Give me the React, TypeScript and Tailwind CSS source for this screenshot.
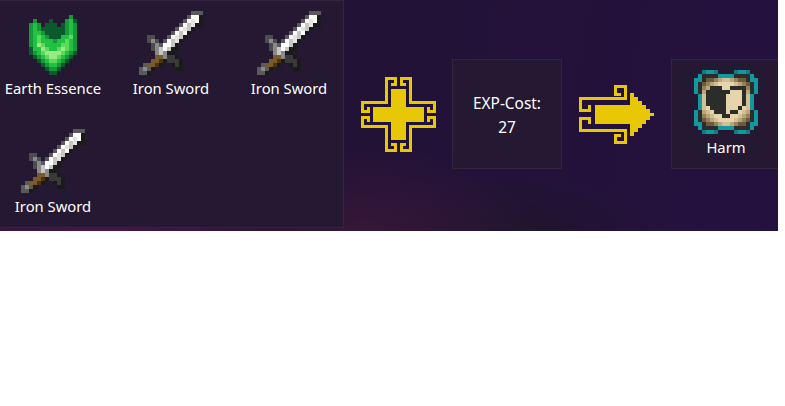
import React from "react";

// palette for the 16x16 item sprites
const colors: Record<string, string> = {
  // earth essence
  d: "#0a5a2b",
  m: "#16973a",
  G: "#22c143",
  L: "#5fd95c",
  P: "#97ea84",
  // sword
  g: "#5a5a5a",
  W: "#ffffff",
  l: "#e4e4e4",
  k: "#1a1a1a",
  A: "#4d4d4d",
  B: "#8a8a8a",
  C: "#c6c6c6",
  S: "#3a3a3a",
  T: "#7a5a26",
  t: "#4a3414",
  // scroll
  a: "#1298a0",
  b: "#0f7c86",
  K: "#2c2c2a",
  1: "#6f5b3c",
  2: "#97815a",
  3: "#b8a47d",
  4: "#d3bf96",
  5: "#e6d5aa",
};

const essence = [
  "................",
  "............m...",
  "...m...d...mGd..",
  "..mGm.ddd.dmGm..",
  "..mGmddddddmGm..",
  "..mGGmdddddmGm..",
  "..mGLGmdddGGLm..",
  "..mGLGGGmGGLGm..",
  "..mGPLGGGGLLGm..",
  "..dGGPLGGLPLGm..",
  "..dmGLPPPPLGmd..",
  "...dmGLPPLGmd...",
  "....dmGLLGmd....",
  ".....dmGGmd.....",
  "......dmmd......",
  ".......dd.......",
];

const sword = [
  ".............ggg",
  "............gWWk",
  "...........gWlWk",
  "..........gWClkk",
  ".........gWlCk..",
  "........gWCWk...",
  "..AA...gWlCk....",
  "..ABA.gWClk.....",
  "...ABgWWCk......",
  "...ABCWCkk......",
  "....BCBkk.......",
  "....TTBSSk......",
  "...TTtkSSSk.....",
  ".gTTtk..kSk.....",
  "gBgk.....kk.....",
  "ggk.............",
];

const scroll = [
  "..baab....baab..",
  ".aKKKKaaaaKKKKa.",
  "aaK1123443211Kaa",
  "aK123455554321Ka",
  "aK23KKK55KKKK2Ka",
  "aK3KKKKKK555K3Ka",
  ".a4KKKKK5555K4a.",
  ".a4KKKKK5555K4a.",
  ".a4KKKKK5555K4a.",
  ".a45KKKK555K54a.",
  "aK345KKK5KK543Ka",
  "aK23455KK55432Ka",
  "aK123455554321Ka",
  "aaK1123443211Kaa",
  ".aKKKKaaaaKKKKa.",
  "..baab....baab..",
];

function Sprite({ rows }: { rows: string[] }) {
  return (
    <svg width="64" height="64" viewBox="0 0 16 16" shapeRendering="crispEdges" className="block">
      {rows.map((row, y) =>
        row.split("").map((c, x) =>
          c === "." ? null : <rect key={`${x}-${y}`} x={x} y={y} width="1" height="1" fill={colors[c]} />
        )
      )}
    </svg>
  );
}

function Item({ rows, label }: { rows: string[]; label: string }) {
  return (
    <div className="flex h-[110px] flex-col items-center pt-[10px]">
      <Sprite rows={rows} />
      <span className="mt-[3px] text-[14.8px] leading-[20px] whitespace-nowrap text-white">{label}</span>
    </div>
  );
}

const PlusIcon = () => {
  const quarter = "M30 7.5H34.5V1.5H25.5V25.5H1.5V34.5H7.5V30";
  return (
    <svg width="75" height="75" viewBox="0 0 75 75" className="mt-[1px] ml-[17px] block shrink-0" shapeRendering="crispEdges">
      <path d="M30 12H45V30H63V45H45V63H30V45H12V30H30Z" fill="#e8c804" />
      <g fill="none" stroke="#e8c804" strokeWidth="3">
        <path d={quarter} />
        <path d={quarter} transform="matrix(-1 0 0 1 75 0)" />
        <path d={quarter} transform="matrix(1 0 0 -1 0 75)" />
        <path d={quarter} transform="matrix(-1 0 0 -1 75 75)" />
      </g>
    </svg>
  );
};

const ArrowIcon = () => (
  <svg width="75" height="59" viewBox="0 0 75 59" className="mt-[1px] ml-[17px] block shrink-0" shapeRendering="crispEdges">
    <path
      d="M16 20H51V8H55V12H59V16H63V20H67V24H71V28H75V31H71V35H67V39H63V43H59V47H55V51H51V39H16Z"
      fill="#e8c804"
    />
    <g fill="none" stroke="#e8c804" strokeWidth="3">
      <path d="M36 1.5H46.5V13.5H1.5V25.5H10.5V20" />
      <path d="M36 0V9H42" />
      <path d="M36 57.5H46.5V45.5H1.5V33.5H10.5V39" />
      <path d="M36 59V50H42" />
    </g>
  </svg>
);

export default function App() {
  return (
    <div className="h-[231px] w-[778px] overflow-hidden bg-[#221238] bg-[radial-gradient(ellipse_170px_90px_at_365px_235px,#371737,transparent),radial-gradient(ellipse_140px_60px_at_510px_235px,#1e162b,transparent),radial-gradient(ellipse_220px_120px_at_100px_250px,#4a1648,transparent),linear-gradient(100deg,#261533,#221236_45%,#25113f)] [font-family:'Noto_Sans',sans-serif]">
      <div className="flex h-[228px] items-center">
        <div className="grid h-[228px] w-[344px] shrink-0 grid-cols-[104px_104px_104px] content-start gap-x-[14px] gap-y-[8px] border border-l-0 border-[#33263c] bg-[#241832] pl-[1px]">
          <Item rows={essence} label="Earth Essence" />
          <Item rows={sword} label="Iron Sword" />
          <Item rows={sword} label="Iron Sword" />
          <Item rows={sword} label="Iron Sword" />
        </div>
        <PlusIcon />
        <div className="ml-[16px] flex h-[110px] w-[110px] shrink-0 flex-col items-center justify-center border border-[#33263c] bg-[#241832] pt-[3px] text-[15.4px] leading-[24px] text-white">
          <span>EXP-Cost:</span>
          <span>27</span>
        </div>
        <ArrowIcon />
        <div className="ml-[17px] h-[110px] w-[110px] shrink-0 border border-[#33263c] bg-[#241832]">
          <div className="flex flex-col items-center pt-[10px]">
            <Sprite rows={scroll} />
            <span className="mt-[3px] text-[14.8px] leading-[20px] text-white">Harm</span>
          </div>
        </div>
      </div>
    </div>
  );
}
